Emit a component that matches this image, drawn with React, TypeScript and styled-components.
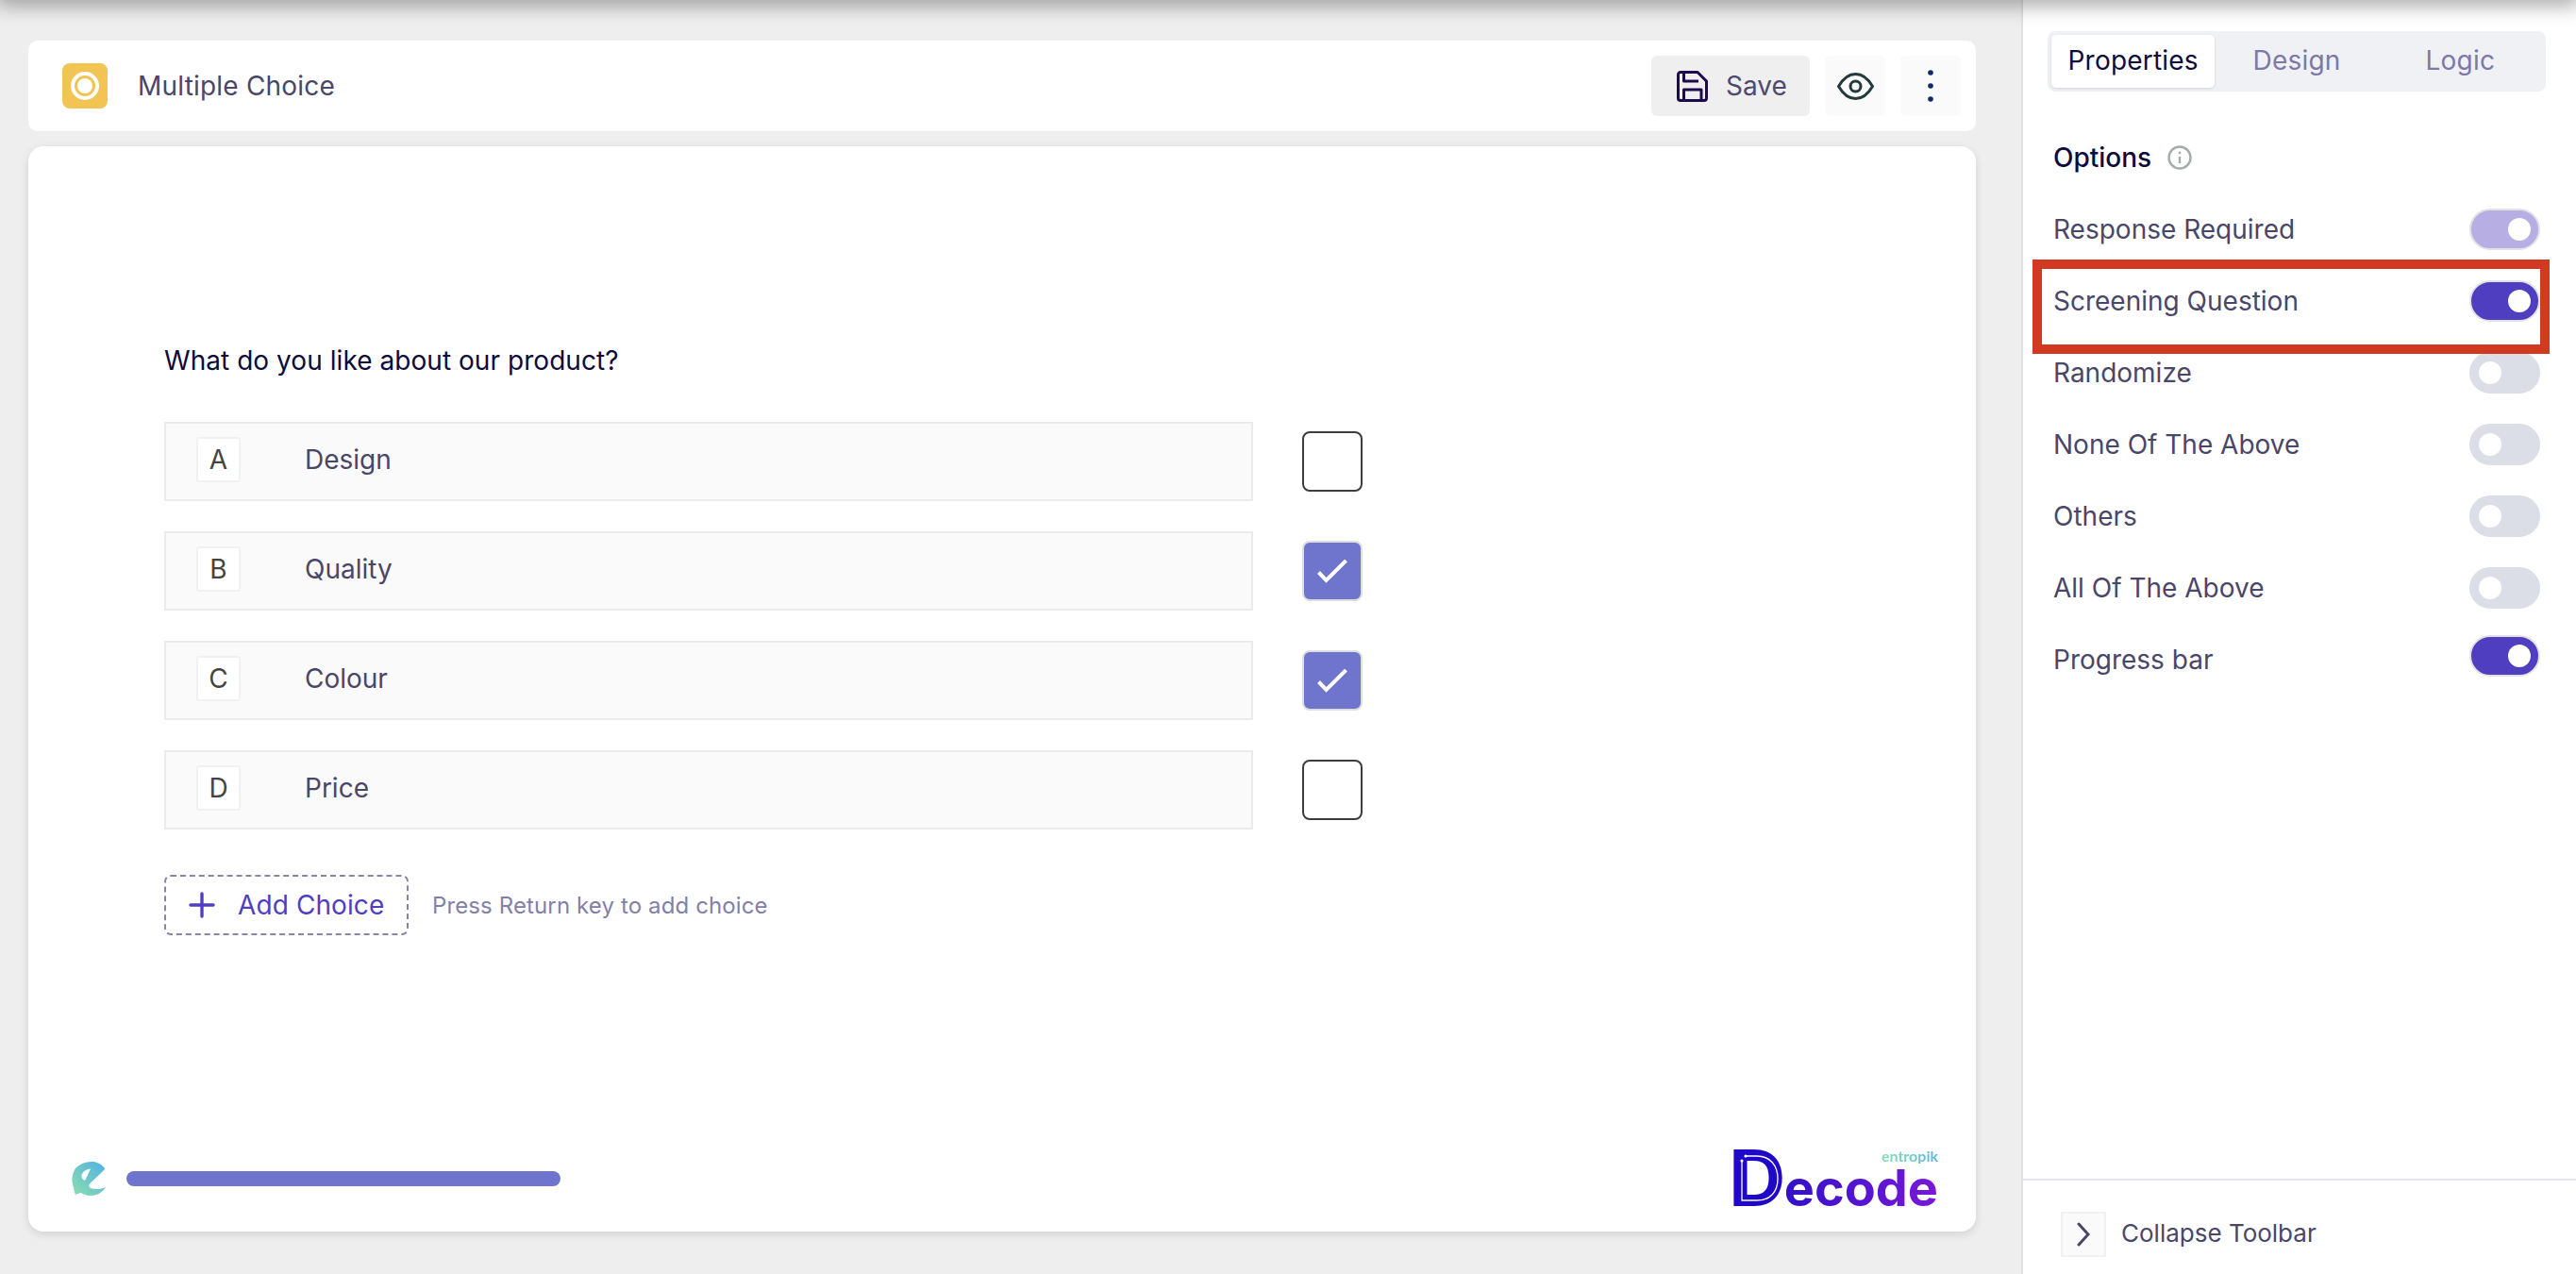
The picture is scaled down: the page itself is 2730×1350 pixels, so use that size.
import styled, { createGlobalStyle } from 'styled-components';

const GlobalStyle = createGlobalStyle`
  html, body {
    margin: 0;
    padding: 0;
    background: #eeeeee;
  }
  body {
    font-family: Inter, "Liberation Sans", sans-serif;
    -webkit-font-smoothing: antialiased;
  }
  * {
    box-sizing: border-box;
  }
`;

const OPTIONS = [
  { letter: 'A', label: 'Design', checked: false },
  { letter: 'B', label: 'Quality', checked: true },
  { letter: 'C', label: 'Colour', checked: true },
  { letter: 'D', label: 'Price', checked: false },
];

const SETTINGS = [
  { label: 'Response Required', state: 'muted' },
  { label: 'Screening Question', state: 'on', highlighted: true },
  { label: 'Randomize', state: 'off' },
  { label: 'None Of The Above', state: 'off' },
  { label: 'Others', state: 'off' },
  { label: 'All Of The Above', state: 'off' },
  { label: 'Progress bar', state: 'on', raised: true },
];

const SaveIcon = () => (
  <svg width="33" height="33" viewBox="0 0 33 33" fill="none" stroke="#1e0a4e" strokeWidth="3" strokeLinejoin="round">
    <path d="M4 1.5H22L31.5 11V29A2.5 2.5 0 0 1 29 31.5H4A2.5 2.5 0 0 1 1.5 29V4A2.5 2.5 0 0 1 4 1.5Z" />
    <path d="M7.5 1.5V11H23" />
    <path d="M7.5 31.5V20H26V31.5" />
  </svg>
);

const EyeIcon = () => (
  <svg width="39" height="29" viewBox="0 0 39 29" fill="none" stroke="#23393c" strokeWidth="3">
    <path d="M1.5 14.5C7 5 13 1.5 19.5 1.5S32 5 37.5 14.5C32 24 26 27.5 19.5 27.5S7 24 1.5 14.5Z" />
    <circle cx="19.5" cy="14.5" r="5.5" />
  </svg>
);

const DotsIcon = () => (
  <svg width="6" height="34" viewBox="0 0 6 34" fill="#0f2a66">
    <circle cx="3" cy="3" r="2.8" />
    <circle cx="3" cy="17" r="2.8" />
    <circle cx="3" cy="31" r="2.8" />
  </svg>
);

const CheckIcon = () => (
  <svg width="32" height="25" viewBox="0 0 32 25" fill="none" stroke="#fff" strokeWidth="4">
    <path d="M1.5 13.5L9.5 21.8L30.5 1" />
  </svg>
);

const InfoIcon = () => (
  <svg width="26" height="26" viewBox="0 0 26 26" fill="none" stroke="#a5abab">
    <circle cx="13" cy="13" r="11.5" strokeWidth="2.4" />
    <path d="M13 12V19" strokeWidth="2.4" />
    <circle cx="13" cy="8" r="1.4" fill="#a5abab" stroke="none" />
  </svg>
);

const EntropikMark = () => (
  <svg width="36" height="36" viewBox="0 0 36 36">
    <defs>
      <linearGradient id="markFill" x1="0" y1="1" x2="1" y2="0">
        <stop offset="0" stopColor="#8cdfae" />
        <stop offset="1" stopColor="#4fb0e6" />
      </linearGradient>
    </defs>
    <path
      fillRule="evenodd"
      fill="url(#markFill)"
      d="M35 7C31 2 26 0 22 0C12 0 4 5 2.5 10C0 15 0 20 1 24L3.8 35L9.6 32.7C13 35 17 36 20 36C27 36 33 32 36 26.7C32 29 27 29.5 22 28.5C19 28 17.5 26 18.5 24L35 8ZM10.5 14C12 10 16 7.5 20 7.7L14 20C11.5 19 10 17 10.5 14Z"
    />
  </svg>
);

const ChevronIcon = () => (
  <svg width="14" height="26" viewBox="0 0 14 26" fill="none" stroke="#4a4668" strokeWidth="3" strokeLinecap="round">
    <path d="M2 2L12 13L2 24" />
  </svg>
);

const PlusIcon = () => (
  <svg width="28" height="28" viewBox="0 0 28 28" fill="none" stroke="#4f3fc0" strokeWidth="3.4" strokeLinecap="round">
    <path d="M14 2V26M2 14H26" />
  </svg>
);

const LogoInlay = () => (
  <svg width="52" height="60" viewBox="0 0 52 60" fill="none" stroke="#fff" strokeWidth="1.3">
    <path d="M11 6H23C37 6 45 16 45 30C45 44 37 53 23 53H7V11" />
    <circle cx="11" cy="6" r="1.6" fill="#fff" stroke="none" />
    <circle cx="7" cy="11" r="1.6" fill="#fff" stroke="none" />
  </svg>
);

export default function App() {
  return (
    <>
      <GlobalStyle />
      <TopShade />
      <Page>
        <Workspace>
          <Header>
            <TypeBadge>
              <TypeRing />
            </TypeBadge>
            <HeaderTitle>Multiple Choice</HeaderTitle>
            <SaveButton>
              <SaveIcon />
              Save
            </SaveButton>
            <IconButton>
              <EyeIcon />
            </IconButton>
            <IconButton>
              <DotsIcon />
            </IconButton>
          </Header>
          <Canvas>
            <Question>What do you like about our product?</Question>
            <ChoiceList>
              {OPTIONS.map((option) => (
                <ChoiceLine key={option.letter}>
                  <Choice>
                    <ChoiceLetter>{option.letter}</ChoiceLetter>
                    <ChoiceLabel>{option.label}</ChoiceLabel>
                  </Choice>
                  <Checkbox $checked={option.checked}>
                    {option.checked && <CheckIcon />}
                  </Checkbox>
                </ChoiceLine>
              ))}
            </ChoiceList>
            <AddLine>
              <AddButton>
                <PlusIcon />
                Add Choice
              </AddButton>
              <AddHint>Press Return key to add choice</AddHint>
            </AddLine>
            <CanvasFooter>
              <EntropikMark />
              <ProgressTrack />
              <DecodeLogo>
                <LogoBrand>entropik</LogoBrand>
                <LogoInitial>
                  <LogoGlyph>D</LogoGlyph>
                  <LogoInlayHolder>
                    <LogoInlay />
                  </LogoInlayHolder>
                </LogoInitial>
                <LogoWord>ecode</LogoWord>
              </DecodeLogo>
            </CanvasFooter>
          </Canvas>
        </Workspace>
        <Sidebar>
          <Tabs>
            <Tab $active>Properties</Tab>
            <Tab>Design</Tab>
            <Tab>Logic</Tab>
          </Tabs>
          <OptionsTitle>
            Options
            <InfoIcon />
          </OptionsTitle>
          <SettingList>
            {SETTINGS.map((setting) => (
              <SettingRow key={setting.label}>
                <SettingLabel>{setting.label}</SettingLabel>
                <Toggle $state={setting.state} $raised={setting.raised}>
                  <ToggleKnob />
                </Toggle>
                {setting.highlighted && <Highlight />}
              </SettingRow>
            ))}
          </SettingList>
          <SidebarFooter>
            <CollapseButton>
              <ChevronIcon />
            </CollapseButton>
            <CollapseLabel>Collapse Toolbar</CollapseLabel>
          </SidebarFooter>
        </Sidebar>
      </Page>
    </>
  );
}

const TopShade = styled.div`
  position: fixed;
  top: -12px;
  left: 0;
  right: 0;
  height: 12px;
  box-shadow: 0 0 22px 4px rgba(0, 0, 0, 0.42);
  z-index: 5;
`;

const Page = styled.div`
  display: flex;
  width: 2730px;
  height: 1350px;
  overflow: hidden;
  background: #eeeeee;
`;

const Workspace = styled.main`
  width: 2142px;
  display: flex;
  flex-direction: column;
  gap: 16px;
  padding: 43px 48px 45px 30px;
`;

const Header = styled.header`
  height: 96px;
  flex: none;
  display: flex;
  align-items: center;
  gap: 16px;
  padding: 0 16px 0 36px;
  background: #fff;
  border-radius: 10px;
`;

const TypeBadge = styled.div`
  width: 48px;
  height: 48px;
  display: flex;
  align-items: center;
  justify-content: center;
  background: #f1c453;
  border-radius: 8px;
`;

const TypeRing = styled.div`
  width: 30px;
  height: 30px;
  padding: 3px;
  border: 4px solid #fff;
  border-radius: 50%;

  &::after {
    content: '';
    display: block;
    width: 100%;
    height: 100%;
    border-radius: 50%;
    background: #fff;
  }
`;

const HeaderTitle = styled.h1`
  flex: 1;
  margin: 0 0 0 16px;
  font-size: 28px;
  font-weight: 400;
  letter-spacing: 0.2px;
  color: #4a4668;
`;

const SaveButton = styled.button`
  width: 168px;
  height: 64px;
  display: flex;
  align-items: center;
  gap: 19px;
  padding: 0 0 0 27px;
  border: none;
  border-radius: 6px;
  background: #efefef;
  font-family: inherit;
  font-size: 28px;
  color: #4e4a6e;
`;

const IconButton = styled.button`
  width: 64px;
  height: 64px;
  display: flex;
  align-items: center;
  justify-content: center;
  padding: 0;
  border: none;
  border-radius: 6px;
  background: #fafafa;
`;

const Canvas = styled.section`
  flex: 1;
  display: flex;
  flex-direction: column;
  padding: 210px 40px 26px 46px;
  background: #fff;
  border-radius: 16px;
  box-shadow: 0 3px 10px rgba(0, 0, 0, 0.12);
`;

const Question = styled.p`
  margin: 0 0 48px 98px;
  font-size: 28px;
  line-height: 34px;
  letter-spacing: 0.05px;
  color: #0f0b3a;
`;

const ChoiceList = styled.div`
  display: flex;
  flex-direction: column;
  gap: 32px;
  margin-left: 98px;
`;

const ChoiceLine = styled.div`
  display: flex;
  align-items: center;
  gap: 52px;
`;

const Choice = styled.div`
  width: 1154px;
  height: 84px;
  display: flex;
  align-items: center;
  gap: 68px;
  padding: 0 0 4px 32px;
  background: #fafafa;
  border: 2px solid #ebebeb;
`;

const ChoiceLetter = styled.span`
  width: 47px;
  height: 48px;
  display: flex;
  align-items: center;
  justify-content: center;
  background: #fff;
  border: 2px solid #f1f1f1;
  border-radius: 3px;
  font-size: 28px;
  color: #444444;
`;

const ChoiceLabel = styled.span`
  font-size: 28px;
  color: #4a4668;
`;

const Checkbox = styled.div<{ $checked: boolean }>`
  width: 64px;
  height: 64px;
  display: flex;
  align-items: center;
  justify-content: center;
  border-radius: 8px;
  border: 2px solid ${({ $checked }) => ($checked ? '#dedede' : '#3d3d3d')};
  background: ${({ $checked }) => ($checked ? '#6f74cc' : '#fff')};
`;

const AddLine = styled.div`
  display: flex;
  align-items: center;
  gap: 25px;
  margin: 48px 0 0 98px;
`;

const AddButton = styled.button`
  width: 259px;
  height: 64px;
  display: flex;
  align-items: center;
  gap: 24px;
  padding: 0 0 0 24px;
  background: #fff;
  border: 2px dashed #8a84a8;
  border-radius: 7px;
  font-family: inherit;
  font-size: 28px;
  letter-spacing: 0.1px;
  color: #4f3fc0;
`;

const AddHint = styled.span`
  font-size: 24px;
  letter-spacing: 0.12px;
  color: #8380a8;
`;

const CanvasFooter = styled.footer`
  margin-top: auto;
  display: flex;
  align-items: center;
  gap: 22px;
`;

const ProgressTrack = styled.div`
  width: 460px;
  height: 16px;
  border-radius: 8px;
  background: #6f74cc;
`;

const DecodeLogo = styled.div`
  position: relative;
  margin-left: auto;
  height: 60px;
  display: flex;
  align-items: flex-end;
`;

const LogoBrand = styled.span`
  position: absolute;
  top: -2px;
  right: 0;
  font-family: Lato, sans-serif;
  font-size: 16px;
  line-height: 16px;
  font-weight: 700;
  background: linear-gradient(90deg, #84dfb0, #58b8e0);
  -webkit-background-clip: text;
  background-clip: text;
  color: transparent;
`;

const LogoWord = styled.span`
  height: 47px;
  margin-bottom: -3px;
  padding: 3px 0 2px;
  font-size: 54px;
  font-weight: 700;
  line-height: 42px;
  background: linear-gradient(90deg, #3210c8 0%, #7a18d8 100%);
  -webkit-background-clip: text;
  background-clip: text;
  color: transparent;
`;

const LogoInitial = styled.span`
  position: relative;
  display: block;
  width: 52px;
  height: 60px;
`;

const LogoGlyph = styled.span`
  display: block;
  margin-left: -6px;
  font-size: 82px;
  font-weight: 800;
  line-height: 60px;
  color: #2008c8;
`;

const LogoInlayHolder = styled.span`
  position: absolute;
  top: 0;
  left: 0;
`;

const Sidebar = styled.aside`
  width: 588px;
  display: flex;
  flex-direction: column;
  background: #fff;
  border-left: 2px solid #e0e0e0;
`;

const Tabs = styled.nav`
  height: 64px;
  flex: none;
  display: grid;
  grid-template-columns: repeat(3, 1fr);
  margin: 33px 32px 0 26px;
  padding: 4px;
  background: #f0f1f5;
  border-radius: 8px;
`;

const Tab = styled.div<{ $active?: boolean }>`
  display: flex;
  align-items: center;
  justify-content: center;
  padding-bottom: 2px;
  font-size: 28px;
  letter-spacing: 0.2px;
  border-radius: 5px;
  color: ${({ $active }) => ($active ? '#0f0b3a' : '#7d78a8')};
  background: ${({ $active }) => ($active ? '#fff' : 'transparent')};
  box-shadow: ${({ $active }) => ($active ? '0 1px 3px rgba(0,0,0,0.12)' : 'none')};
`;

const OptionsTitle = styled.h2`
  height: 32px;
  flex: none;
  display: flex;
  align-items: center;
  gap: 17px;
  margin: 54px 0 22px 32px;
  font-size: 28px;
  font-weight: 500;
  color: #0f0b3a;
`;

const SettingList = styled.div`
  display: flex;
  flex-direction: column;
  padding: 0 38px 0 32px;
`;

const SettingRow = styled.div`
  position: relative;
  height: 76px;
  display: flex;
  align-items: center;
  justify-content: space-between;
`;

const SettingLabel = styled.span`
  font-size: 28px;
  color: #4a4668;
`;

const Toggle = styled.div<{ $state: string; $raised?: boolean }>`
  width: 75px;
  height: 44px;
  display: flex;
  align-items: center;
  justify-content: ${({ $state }) => ($state === 'off' ? 'flex-start' : 'flex-end')};
  padding: 0 8px;
  margin-bottom: ${({ $raised }) => ($raised ? '8px' : '0')};
  border-radius: 22px;
  border: 2px solid ${({ $state }) => ($state === 'off' ? '#dcdee7' : '#e2e2e6')};
  background: ${({ $state }) =>
    $state === 'on' ? '#4f3fc0' : $state === 'muted' ? '#b7afe4' : '#dcdee7'};
`;

const ToggleKnob = styled.span`
  width: 24px;
  height: 24px;
  border-radius: 50%;
  background: #fff;
`;

const Highlight = styled.div`
  position: absolute;
  top: -6px;
  left: -22px;
  right: -10px;
  bottom: -18px;
  border: 10px solid #d13a20;
  z-index: 2;
`;

const SidebarFooter = styled.footer`
  margin-top: auto;
  height: 101px;
  display: flex;
  align-items: flex-start;
  gap: 16px;
  padding: 33px 0 0 40px;
  border-top: 2px solid #e6e6ec;
`;

const CollapseButton = styled.div`
  width: 48px;
  height: 48px;
  display: flex;
  align-items: center;
  justify-content: center;
  background: #fafafa;
  border: 2px solid #f0f0f0;
`;

const CollapseLabel = styled.span`
  font-size: 26px;
  line-height: 46px;
  color: #4a4668;
`;
